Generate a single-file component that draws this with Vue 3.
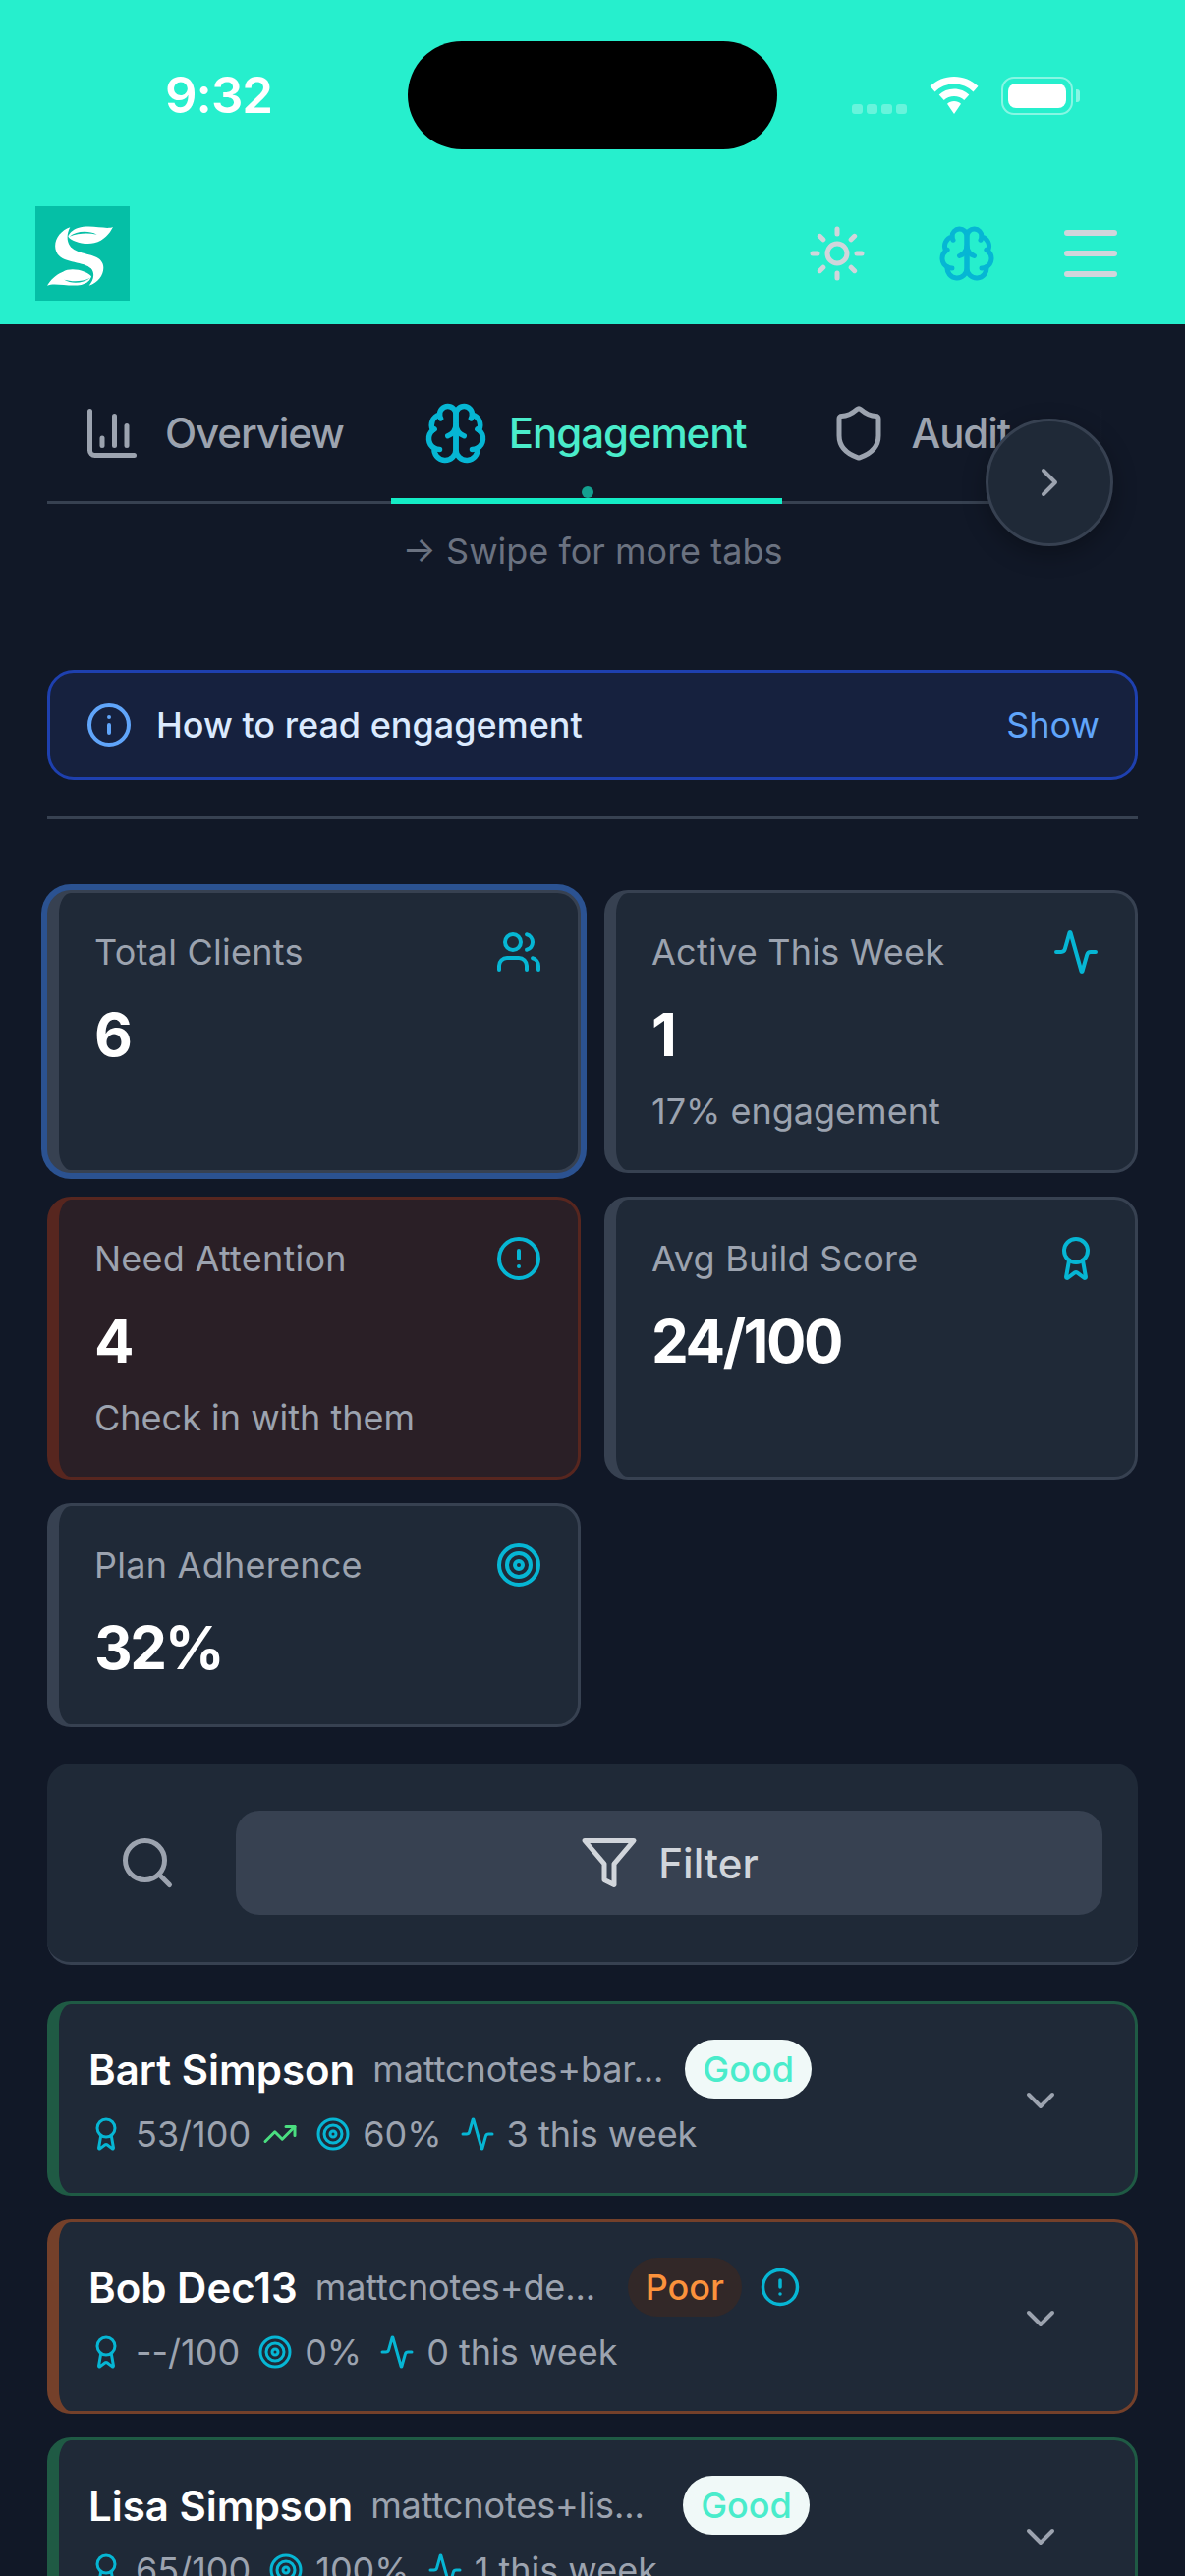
<template>
  <div class="screen">
    <header class="top">
      <div class="status-bar">
        <span class="time">9:32</span>
        <div class="island"></div>
        <div class="status-icons">
          <div class="signal"><i></i><i></i><i></i><i></i></div>
          <svg class="wifi" viewBox="0 0 50 38" fill="#fff">
            <path d="M25 0C15.500 0 7 3.700 .5 9.800l5 5.600C10.600 10.500 17.500 7.500 25 7.500s14.400 3 19.500 7.900l5-5.600C43 3.700 34.500 0 25 0Z" />
            <path d="M25 12.500c-6 0-11.300 2.300-15.300 6l5 5.600c2.700-2.500 6.300-4 10.300-4s7.600 1.500 10.300 4l5-5.600c-4-3.700-9.300-6-15.300-6Z" />
            <path d="M25 25c-2.700 0-5.200 1-7 2.700L25 38l7-10.300C30.200 26 27.700 25 25 25Z" />
          </svg>
          <div class="battery"><div class="charge"></div></div>
        </div>
      </div>
      <div class="app-bar">
        <svg class="logo" viewBox="0 0 288 288">
          <rect width="288" height="288" fill="#05bfa6" />
          <path fill="#fff" d="M106 64C70 76 48 116 68 146C88 174 150 168 170 190C184 206 176 228 164 242C196 232 214 200 206 176C196 146 150 150 118 132C96 120 92 90 106 64Z" />
          <path fill="#fff" d="M237 63C215 72 170 54 130 66C112 72 102 84 100 92C108 106 150 120 180 112C210 104 226 84 237 63Z" />
          <path fill="#05bfa6" d="M104 92C124 76 160 72 188 86C160 80 130 82 104 92Z" />
          <path fill="#fff" d="M36 242C58 232 100 246 140 240C158 236 168 226 171 214C160 198 110 184 84 200C60 210 46 226 36 242Z" />
          <path fill="#05bfa6" d="M88 224C110 230 140 232 168 218C146 236 110 238 88 224Z" />
        </svg>
        <div class="actions">
          <Icon name="sun" class="s60 light" />
          <Icon name="brain" class="s60 cyan" />
          <svg class="s60 light menu" viewBox="0 0 60 60" fill="none" stroke="currentColor" stroke-width="6" stroke-linecap="round">
            <path d="M6 9h48M6 30h48M6 51h48" />
          </svg>
        </div>
      </div>
    </header>

    <main class="page">
      <div class="tabs-wrap">
        <div class="tabs">
          <div v-for="tab in tabs" :key="tab.label" class="tab" :class="{ active: tab.active }">
            <Icon :name="tab.icon" class="s60 tab-icon" />
            <span>{{ tab.label }}</span>
            <i v-if="tab.active" class="tab-dot"></i>
          </div>
        </div>
        <div class="fade"></div>
        <div class="more"><Icon name="chevronRight" class="s48" /></div>
      </div>
      <p class="swipe">→ Swipe for more tabs</p>

      <div class="info">
        <Icon name="info" class="s48 info-icon" />
        <span class="info-text">How to read engagement</span>
        <span class="info-show">Show</span>
      </div>
      <div class="divider"></div>

      <section class="stats">
        <div v-for="s in stats" :key="s.label" class="stat" :class="s.kind">
          <div class="stat-head">
            <span class="stat-label">{{ s.label }}</span>
            <Icon :name="s.icon" class="s48 cyan" />
          </div>
          <div class="stat-value">{{ s.value }}</div>
          <div v-if="s.sub" class="stat-sub">{{ s.sub }}</div>
        </div>
      </section>

      <section class="tools">
        <div class="search"><Icon name="search" class="s60" /></div>
        <div class="filter"><Icon name="filter" class="s60" /><span>Filter</span></div>
      </section>

      <section class="clients">
        <div v-for="c in clients" :key="c.name" class="client" :class="c.status.toLowerCase()">
          <div class="client-main">
            <div class="client-top">
              <span class="client-name">{{ c.name }}</span>
              <span class="client-email">{{ c.email }}</span>
              <span class="badge">{{ c.status }}</span>
              <Icon v-if="c.alert" name="alert" class="s42 cyan" />
            </div>
            <div class="client-meta">
              <div class="meta">
                <Icon name="award" class="s36 cyan" /><span>{{ c.score }}</span>
                <Icon v-if="c.trend" name="trend" class="s36 green" />
              </div>
              <div class="meta"><Icon name="target" class="s36 cyan" /><span>{{ c.adherence }}</span></div>
              <div class="meta"><Icon name="activity" class="s36 cyan" /><span>{{ c.week }}</span></div>
            </div>
          </div>
          <Icon name="chevronDown" class="s48 chev" />
        </div>
      </section>
    </main>
  </div>
</template>

<script setup>
import { h } from 'vue'

const icons = {
  sun: '<circle cx="12" cy="12" r="4"/><path d="M12 2v2M12 20v2M4.930 4.930l1.410 1.410M17.660 17.660l1.410 1.410M2 12h2M20 12h2M6.340 17.660l-1.410 1.410M19.070 4.930l-1.410 1.410"/>',
  brain: '<path d="M12 5a3 3 0 1 0-5.997.125 4 4 0 0 0-2.526 5.770 4 4 0 0 0 .556 6.588A4 4 0 1 0 12 18Z"/><path d="M12 5a3 3 0 1 1 5.997.125 4 4 0 0 1 2.526 5.770 4 4 0 0 1-.556 6.588A4 4 0 1 1 12 18Z"/><path d="M15 13a4.500 4.500 0 0 1-3-4 4.500 4.500 0 0 1-3 4"/><path d="M17.599 6.500a3 3 0 0 0 .399-1.375"/><path d="M6.003 5.125A3 3 0 0 0 6.401 6.500"/><path d="M3.477 10.896a4 4 0 0 1 .585-.396"/><path d="M19.938 10.500a4 4 0 0 1 .585.396"/><path d="M6 18a4 4 0 0 1-1.967-.516"/><path d="M19.967 17.484A4 4 0 0 1 18 18"/>',
  chart: '<path d="M3 3v16a2 2 0 0 0 2 2h16"/><path d="M18 17V9"/><path d="M13 17V5"/><path d="M8 17v-3"/>',
  shield: '<path d="M20 13c0 5-3.500 7.500-7.660 8.950a1 1 0 0 1-.670-.010C7.500 20.500 4 18 4 13V6a1 1 0 0 1 1-1c2 0 4.500-1.200 6.240-2.720a1.170 1.170 0 0 1 1.520 0C14.510 3.810 17 5 19 5a1 1 0 0 1 1 1z"/>',
  file: '<path d="M15 2H6a2 2 0 0 0-2 2v16a2 2 0 0 0 2 2h12a2 2 0 0 0 2-2V7Z"/><path d="M14 2v4a2 2 0 0 0 2 2h4"/><path d="M10 9H8M16 13H8M16 17H8"/>',
  chevronRight: '<path d="m9 18 6-6-6-6"/>',
  chevronDown: '<path d="m6 9 6 6 6-6"/>',
  info: '<circle cx="12" cy="12" r="10"/><path d="M12 16v-4M12 8h.01"/>',
  users: '<path d="M16 21v-2a4 4 0 0 0-4-4H6a4 4 0 0 0-4 4v2"/><circle cx="9" cy="7" r="4"/><path d="M22 21v-2a4 4 0 0 0-3-3.870"/><path d="M16 3.130a4 4 0 0 1 0 7.750"/>',
  activity: '<path d="M22 12h-2.480a2 2 0 0 0-1.930 1.460l-2.350 8.360a.25.25 0 0 1-.48 0L9.240 2.180a.25.25 0 0 0-.48 0l-2.350 8.360A2 2 0 0 1 4.490 12H2"/>',
  alert: '<circle cx="12" cy="12" r="10"/><path d="M12 8v4M12 16h.01"/>',
  award: '<path d="m15.477 12.890 1.515 8.526a.5.5 0 0 1-.81.470l-3.580-2.687a1 1 0 0 0-1.197 0l-3.586 2.686a.5.5 0 0 1-.81-.469l1.514-8.526"/><circle cx="12" cy="8" r="6"/>',
  target: '<circle cx="12" cy="12" r="10"/><circle cx="12" cy="12" r="6"/><circle cx="12" cy="12" r="2"/>',
  search: '<path d="m21 21-4.300-4.300"/><circle cx="11" cy="11" r="8"/>',
  filter: '<path d="M22 3H2l8 9.460V19l4 2v-8.540Z"/>',
  trend: '<path d="M22 7l-8.500 8.500-5-5L2 17"/><path d="M16 7h6v6"/>'
}

const Icon = (props) =>
  h('svg', {
    viewBox: '0 0 24 24',
    fill: 'none',
    stroke: 'currentColor',
    'stroke-width': 2,
    'stroke-linecap': 'round',
    'stroke-linejoin': 'round',
    innerHTML: icons[props.name]
  })
Icon.props = ['name']

const tabs = [
  { label: 'Overview', icon: 'chart' },
  { label: 'Engagement', icon: 'brain', active: true },
  { label: 'Audit', icon: 'shield' },
  { label: 'Reports', icon: 'file' }
]

const stats = [
  { label: 'Total Clients', value: '6', icon: 'users', kind: 'selected' },
  { label: 'Active This Week', value: '1', sub: '17% engagement', icon: 'activity' },
  { label: 'Need Attention', value: '4', sub: 'Check in with them', icon: 'alert', kind: 'danger' },
  { label: 'Avg Build Score', value: '24/100', icon: 'award' },
  { label: 'Plan Adherence', value: '32%', icon: 'target' }
]

const clients = [
  { name: 'Bart Simpson', email: 'mattcnotes+bar...', status: 'Good', score: '53/100', trend: true, adherence: '60%', week: '3 this week' },
  { name: 'Bob Dec13', email: 'mattcnotes+de...', status: 'Poor', alert: true, score: '--/100', adherence: '0%', week: '0 this week' },
  { name: 'Lisa Simpson', email: 'mattcnotes+lis...', status: 'Good', score: '65/100', adherence: '100%', week: '1 this week' }
]
</script>

<style>
html, body { margin: 0; background: #111827; }
</style>

<style scoped>
.screen {
  width: 1206px;
  height: 2622px;
  overflow: hidden;
  background: #111827;
  font-family: Inter, "Noto Sans", sans-serif;
  color: #fff;
}

.s36 { width: 36px; height: 36px; flex: none; }
.s42 { width: 42px; height: 42px; flex: none; }
.s48 { width: 48px; height: 48px; flex: none; }
.s60 { width: 60px; height: 60px; flex: none; }
.cyan { color: #06b6d4; }
.light { color: #d1d5db; }
.green { color: #4ade80; }

/* header */
.top { background: #26efcd; height: 330px; }
.status-bar {
  position: relative;
  height: 210px;
  display: flex;
  align-items: flex-start;
  justify-content: space-between;
  padding: 66px 114px 0 168px;
  box-sizing: border-box;
}
.time { font-size: 51px; line-height: 62px; font-weight: 600; letter-spacing: -1px; }
.island {
  position: absolute;
  left: 415px;
  top: 42px;
  width: 376px;
  height: 110px;
  border-radius: 55px;
  background: #000;
}
.status-icons { display: flex; align-items: flex-start; padding-top: 12px; }
.signal { display: flex; gap: 4px; margin-top: 28px; margin-right: 23px; }
.signal i { width: 11px; height: 10px; border-radius: 3px; background: rgba(255, 255, 255, 0.3); }
.wifi { width: 50px; height: 38px; margin-right: 23px; }
.battery {
  position: relative;
  width: 73px;
  height: 39px;
  padding: 5px;
  box-sizing: border-box;
  border: 2px solid rgba(255, 255, 255, 0.45);
  border-radius: 13px;
}
.battery::after {
  content: "";
  position: absolute;
  right: -9px;
  top: 11px;
  width: 4px;
  height: 13px;
  border-radius: 0 3px 3px 0;
  background: rgba(255, 255, 255, 0.45);
}
.charge { height: 100%; border-radius: 8px; background: #fff; }
.app-bar {
  display: flex;
  align-items: center;
  justify-content: space-between;
  padding: 0 66px 0 36px;
  height: 96px;
}
.logo { width: 96px; height: 96px; display: block; }
.actions { display: flex; align-items: center; gap: 72px; }
.menu { margin-left: -6px; }

/* tabs */
.page { padding: 0 48px; }
.tabs-wrap { position: relative; padding-top: 45px; }
.tabs {
  display: flex;
  gap: 12px;
  overflow: hidden;
  box-shadow: inset 0 -3px 0 #374151;
}
.tab {
  position: relative;
  flex: none;
  display: flex;
  align-items: center;
  gap: 24px;
  padding: 36px 36px 36px;
  border-bottom: 6px solid transparent;
  font-size: 42px;
  line-height: 60px;
  font-weight: 500;
  letter-spacing: -1.1px;
  color: #9ca3af;
}
.tab.active { color: #4aeccb; border-bottom-color: #14ecc6; }
.tab.active .tab-icon { color: #06b6d4; transform: scale(1.1); }
.tab-dot {
  position: absolute;
  left: 194px;
  bottom: 0;
  width: 12px;
  height: 12px;
  border-radius: 50%;
  background: #14a08f;
}
.fade {
  position: absolute;
  top: 0;
  right: 0;
  bottom: 0;
  width: 90px;
  background: linear-gradient(to right, rgba(17, 24, 39, 0.6), #111827 60%);
}
.more {
  position: absolute;
  right: 25px;
  top: 96px;
  width: 130px;
  height: 130px;
  box-sizing: border-box;
  display: flex;
  align-items: center;
  justify-content: center;
  border: 3px solid #374151;
  border-radius: 50%;
  background: #1f2937;
  color: #9ca3af;
  box-shadow: 0 8px 24px rgba(0, 0, 0, 0.3);
}
.swipe {
  margin: 21px 0 0;
  text-align: center;
  font-size: 36px;
  line-height: 54px;
  color: #6b7280;
}

/* info */
.info {
  margin-top: 94px;
  display: flex;
  align-items: center;
  gap: 24px;
  height: 112px;
  box-sizing: border-box;
  padding: 0 36px;
  border: 3px solid #1e40af;
  border-radius: 27px;
  background: #16213e;
  font-size: 36px;
  font-weight: 500;
}
.info-icon { color: #60a5fa; }
.info-text { flex: 1; color: #dbeafe; }
.info-show { color: #60a5fa; font-weight: 400; }
.divider { height: 3px; margin-top: 37px; background: #374151; }

/* stat cards */
.stats {
  margin-top: 72px;
  display: grid;
  grid-template-columns: 1fr 1fr;
  gap: 24px;
}
.stat {
  padding: 36px;
  background: #1f2937;
  border: 3px solid #374151;
  border-left-width: 12px;
  border-radius: 24px;
}
.stat.selected { box-shadow: 0 0 0 6px #2b5291; }
.stat.danger { background: #2a1f26; border-color: #57261f; }
.stat-head { display: flex; align-items: center; justify-content: space-between; }
.stat-label { font-size: 36px; line-height: 48px; letter-spacing: 0.25px; color: #9ca3af; }
.stat-value { margin: 24px 0 6px; font-size: 60px; line-height: 72px; font-weight: 700; letter-spacing: -2.4px; }
.stat-sub { margin-top: 18px; font-size: 36px; line-height: 48px; color: #9ca3af; }

/* search and filter */
.tools {
  margin-top: 37px;
  display: flex;
  align-items: center;
  gap: 24px;
  padding: 48px 36px;
  background: #1f2937;
  border-bottom: 3px solid #374151;
  border-radius: 24px;
}
.search {
  display: flex;
  padding: 0 36px;
  color: #9ca3af;
}
.filter {
  flex: 1;
  height: 106px;
  display: flex;
  align-items: center;
  justify-content: center;
  gap: 20px;
  border-radius: 24px;
  background: #374151;
  color: #d1d5db;
  font-size: 42px;
  font-weight: 500;
}

/* client rows */
.clients {
  margin-top: 37px;
  display: flex;
  flex-direction: column;
  gap: 24px;
}
.client {
  display: flex;
  align-items: center;
  padding: 36px 72px 33px 30px;
  background: #1f2937;
  border: 3px solid #1f5a44;
  border-left-width: 12px;
  border-radius: 24px;
}
.client.poor { border-color: #74402a; }
.client-main { flex: 1; min-width: 0; }
.client-top { display: flex; align-items: center; gap: 18px; height: 60px; }
.client-name { font-size: 42px; font-weight: 600; white-space: nowrap; }
.client-email {
  flex: none;
  width: 300px;
  font-size: 36px;
  letter-spacing: -0.1px;
  color: #9ca3af;
  white-space: nowrap;
}
.badge {
  padding: 0 18px;
  height: 60px;
  display: flex;
  align-items: center;
  border-radius: 30px;
  font-size: 36px;
  font-weight: 500;
  background: #f0f9f8;
  color: #4aeccb;
}
.poor .badge { background: #322828; color: #fb923c; }
.client-meta {
  margin-top: 9px;
  display: flex;
  align-items: center;
  gap: 18px;
  font-size: 36px;
  line-height: 54px;
  color: #9ca3af;
}
.meta { display: flex; align-items: center; gap: 12px; }
.chev { color: #9ca3af; }

.tab-icon { display: block; }
</style>
